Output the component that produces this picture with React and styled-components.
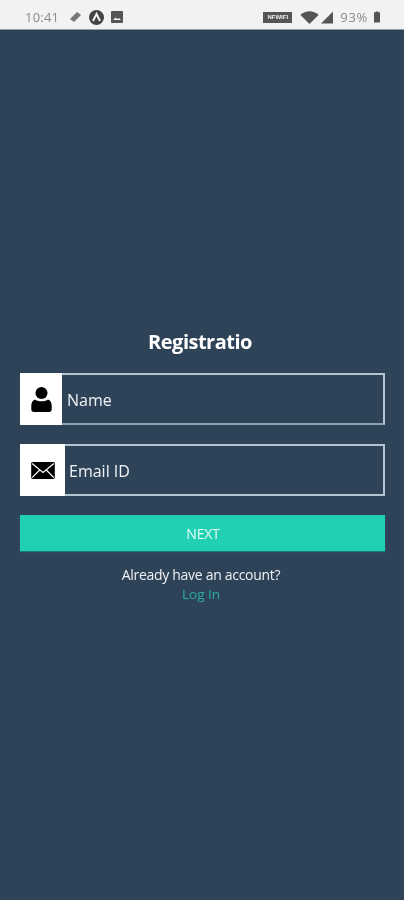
import React from 'react';
import styled, { createGlobalStyle } from 'styled-components';

const GlobalStyle = createGlobalStyle`
html, body {
  margin: 0;
  padding: 0;
  background: #2f4358;
}
* {
  box-sizing: border-box;
}
`

const Screen = styled.div`
width: 404px;
height: 900px;
display: flex;
flex-direction: column;
background: #2f4358;
font-family: "Open Sans", "Liberation Sans", sans-serif;
overflow: hidden;
filter: blur(0.5px);
`

const StatusBar = styled.div`
height: 30px;
flex-shrink: 0;
display: flex;
align-items: center;
justify-content: space-between;
padding: 5px 24px 0 25px;
background: #f2f2f2;
border-bottom: 1px solid #8ea0ad;
color: #8b8b8b;
font-family: "Open Sans", sans-serif;
font-size: 13px;
`

const StatusGroup = styled.div`
display: flex;
align-items: center;
gap: ${props => props.$gap}px;
`

const StatusTime = styled.span`
margin-right: 3px;
letter-spacing: 0.2px;
`

const StatusPercent = styled.span`
margin: 0 4px 0 5px;
letter-spacing: 0.7px;
`

const SpeedBadge = styled.span`
width: 29px;
height: 11px;
margin-right: 6px;
background: #555;
color: #eee;
font-family: "Liberation Sans", sans-serif;
font-size: 6px;
font-weight: 700;
line-height: 11px;
text-align: center;
`

const Form = styled.div`
display: flex;
flex-direction: column;
padding: 298px 19px 0 20px;
`

const Title = styled.h1`
margin: 0 0 18px;
padding-right: 5px;
color: #fff;
font-family: "Open Sans", sans-serif;
font-size: 20px;
font-weight: 700;
line-height: 27px;
text-align: center;
letter-spacing: -0.5px;
`

const Field = styled.div`
height: 52px;
display: flex;
margin-bottom: 19px;
border: 2px solid #b4c4d0;
border-bottom-color: ${props => props.$first ? '#8fa0b0' : '#b4c4d0'};
`

const IconBox = styled.div`
width: ${props => props.$width}px;
flex-shrink: 0;
display: flex;
align-items: center;
justify-content: center;
background: #fff;
margin: -2px 0 -2px -2px;
`

const FieldText = styled.div`
display: flex;
align-items: center;
padding: 2px 0 0 ${props => props.$pad}px;
color: #f0f3f5;
font-size: 16px;
`

const NextButton = styled.button`
width: 100%;
height: 36px;
border: 0;
padding: 0 0 0 1px;
background: #21d0b2;
box-shadow: 0 1px 1px #1b7d78;
color: #e9fbf7;
font-family: "Open Sans", sans-serif;
font-size: 14px;
letter-spacing: -0.2px;
`

const Question = styled.div`
margin-top: 14px;
padding-right: 3px;
color: #eef1f3;
font-size: 14px;
line-height: 19px;
text-align: center;
letter-spacing: -0.3px;
`

const LogIn = styled.a`
display: block;
padding: 1px 3px 0 0;
color: #2aaea6;
font-size: 13.5px;
line-height: 19px;
text-align: center;
`

const PersonIcon = () => (
  <svg width="21" height="26" viewBox="0 0 22 28">
    <circle cx="11" cy="7.5" r="6.5" fill="#000" />
    <path d="M4 14.5 C6 17 16 17 18 14.5 C21 15.5 22 18 22 22 L22 25 C22 27 21 28 19 28 L3 28 C1 28 0 27 0 25 L0 22 C0 18 1 15.5 4 14.5Z" fill="#000" />
  </svg>
);

const MailIcon = () => (
  <svg width="24" height="17" viewBox="0 0 25 18">
    <rect width="25" height="18" rx="1.5" fill="#000" />
    <path d="M1 1.5 L12.5 11 L24 1.5 M1 16.5 L9 8.5 M24 16.5 L16 8.5" fill="none" stroke="#fff" strokeWidth="1.3" />
  </svg>
);

const LinkIcon = () => (
  <svg width="13" height="12" viewBox="0 0 13 12">
    <path d="M8 1 L12 4 L5 11 L1 8Z" fill="#777" />
  </svg>
);

const AppCircle = () => (
  <svg width="15" height="15" viewBox="0 0 15 15">
    <circle cx="7.5" cy="7.5" r="7.5" fill="#444" />
    <path d="M4 11 L7.5 4 L11 11" fill="none" stroke="#f2f2f2" strokeWidth="2" />
  </svg>
);

const PictureIcon = () => (
  <svg width="12" height="12" viewBox="0 0 12 12">
    <rect width="12" height="12" rx="1" fill="#555" />
    <path d="M2 9 L4.5 6.5 L6.5 8 L8 7 L10 9Z" fill="#f2f2f2" />
  </svg>
);

const WifiIcon = () => (
  <svg width="19" height="13" viewBox="0 0 18 13">
    <path d="M0 4 C5 -1 13 -1 18 4 L9 13Z" fill="#555" />
  </svg>
);

const SignalIcon = () => (
  <svg width="12" height="13" viewBox="0 0 13 13">
    <path d="M13 0 L13 13 L0 13Z" fill="#555" />
  </svg>
);

const BatteryIcon = () => (
  <svg width="6" height="12" viewBox="0 0 7 13">
    <path d="M2 0 H5 V1 H7 V13 H0 V1 H2Z" fill="#555" />
  </svg>
);

const App = () => {
  return (
    <Screen>
      <GlobalStyle />
      <StatusBar>
        <StatusGroup $gap={7}>
          <StatusTime>10:41</StatusTime>
          <LinkIcon />
          <AppCircle />
          <PictureIcon />
        </StatusGroup>
        <StatusGroup $gap={2}>
          <SpeedBadge>NFWIFI</SpeedBadge>
          <WifiIcon />
          <SignalIcon />
          <StatusPercent>93%</StatusPercent>
          <BatteryIcon />
        </StatusGroup>
      </StatusBar>
      <Form>
        <Title>Registratio</Title>
        <Field $first>
          <IconBox $width={42}><PersonIcon /></IconBox>
          <FieldText $pad={5}>Name</FieldText>
        </Field>
        <Field>
          <IconBox $width={45}><MailIcon /></IconBox>
          <FieldText $pad={4}>Email ID</FieldText>
        </Field>
        <NextButton>NEXT</NextButton>
        <Question>Already have an account?</Question>
        <LogIn>Log In</LogIn>
      </Form>
    </Screen>
  );
}

export default App;
